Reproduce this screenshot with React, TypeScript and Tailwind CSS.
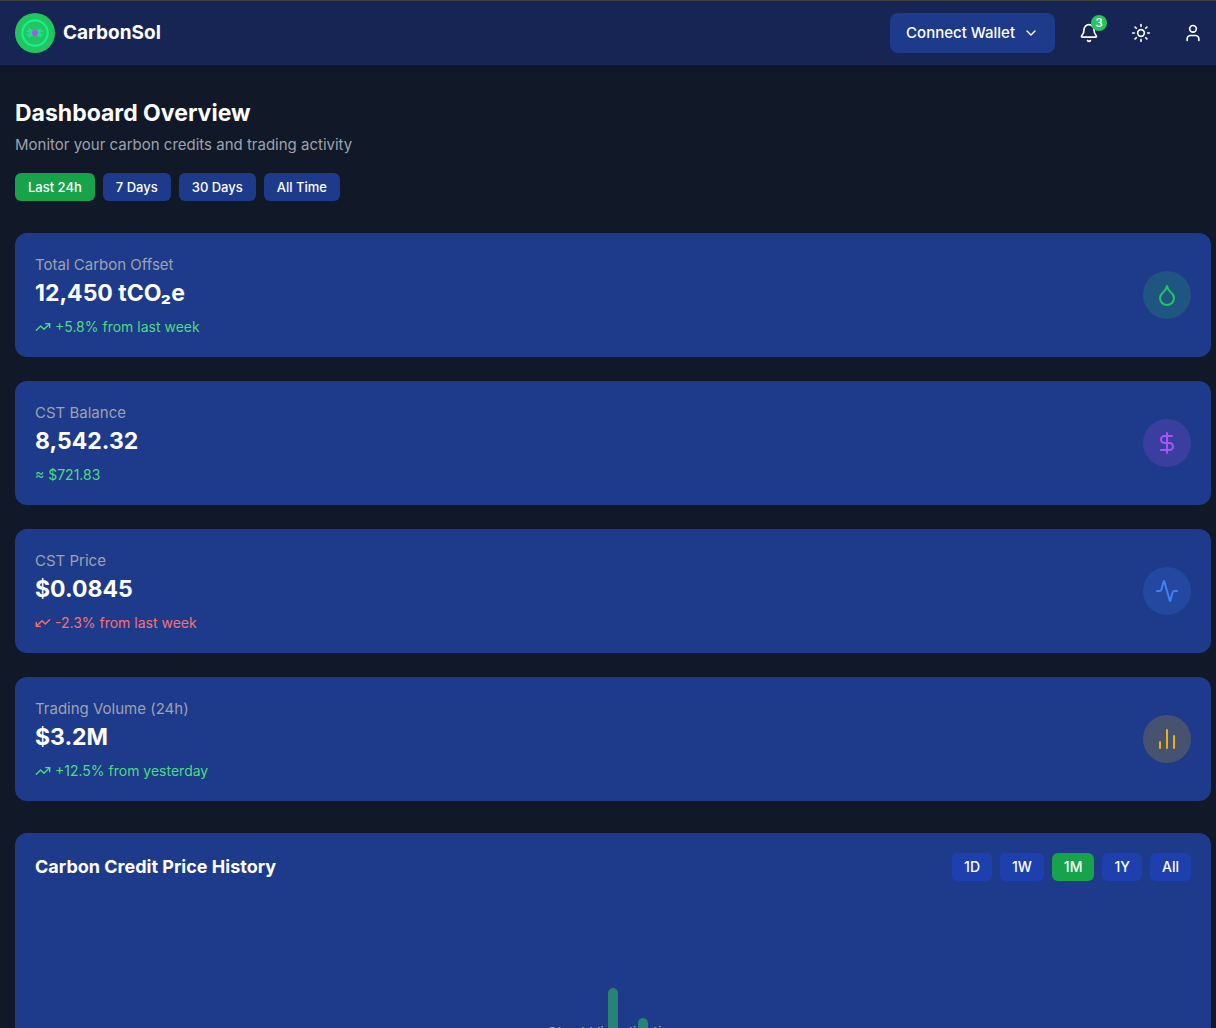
import React from "react";
import {
  Activity,
  Bell,
  ChartNoAxesColumn,
  ChevronDown,
  DollarSign,
  Droplet,
  Sun,
  TrendingUp,
  User,
} from "lucide-react";

function Logo() {
  return (
    <svg className="size-10" viewBox="0 0 40 40" aria-hidden="true">
      <circle cx="20" cy="20" r="20" fill="#22c55e" />
      <circle cx="20" cy="20" r="12.6" fill="none" stroke="#14f195" strokeWidth="2.2" />
      <path
        d="M13.5 16 L20 19.5 L26.5 16 M13.5 24 L20 20.5 L26.5 24"
        fill="none"
        stroke="#1ee391"
        strokeWidth="1.8"
      />
      <path
        d="M11.5 18 L20 20 L28.5 18 M11.5 22 L20 20 L28.5 22"
        fill="none"
        stroke="#1ee391"
        strokeWidth="1.6"
      />
      <circle cx="20" cy="20" r="3" fill="#a855f7" />
    </svg>
  );
}

function Header() {
  return (
    <header className="flex h-[65px] items-center justify-between border-t border-[#404040] bg-[#172554] pr-[5px] pl-[15px]">
      <a href="#" className="flex items-center gap-2">
        <Logo />
        <span className="text-[19px] font-bold">CarbonSol</span>
      </a>
      <div className="flex items-center gap-4">
        <button className="flex h-10 items-center gap-2 rounded-lg bg-[#1e3a8a] px-4 text-[15px] font-medium">
          Connect Wallet
          <ChevronDown className="size-4" />
        </button>
        <button className="relative p-2" aria-label="Notifications">
          <Bell className="size-5" />
          <span className="absolute top-0 right-0 flex size-4 items-center justify-center rounded-full bg-[#22c55e] text-xs font-medium">
            3
          </span>
        </button>
        <button className="p-2" aria-label="Toggle theme">
          <Sun className="size-5" />
        </button>
        <button className="p-2" aria-label="Account">
          <User className="size-5" />
        </button>
      </div>
    </header>
  );
}

const stats = [
  {
    label: "Total Carbon Offset",
    value: "12,450 tCO₂e",
    note: "+5.8% from last week",
    noteClass: "text-[#4ade80]",
    trend: "up",
    icon: Droplet,
    iconClass: "bg-[#22c55e]/20 text-[#22c55e]",
  },
  {
    label: "CST Balance",
    value: "8,542.32",
    note: "≈ $721.83",
    noteClass: "text-[#4ade80]",
    trend: "none",
    icon: DollarSign,
    iconClass: "bg-[#a855f7]/20 text-[#a855f7]",
  },
  {
    label: "CST Price",
    value: "$0.0845",
    note: "-2.3% from last week",
    noteClass: "text-[#f87171]",
    trend: "down",
    icon: Activity,
    iconClass: "bg-[#3b82f6]/20 text-[#3b82f6]",
  },
  {
    label: "Trading Volume (24h)",
    value: "$3.2M",
    note: "+12.5% from yesterday",
    noteClass: "text-[#4ade80]",
    trend: "up",
    icon: ChartNoAxesColumn,
    iconClass: "bg-[#eab308]/20 text-[#eab308]",
  },
];

function StatCard({ stat }: { stat: (typeof stats)[number] }) {
  const Icon = stat.icon;
  return (
    <section className="flex items-center justify-between rounded-xl bg-[#1e3a8a] p-5">
      <div>
        <p className="text-[15px] leading-6 text-[#9ca3af]">{stat.label}</p>
        <p className="text-[23px] leading-8 font-bold">{stat.value}</p>
        <p className={`mt-2 flex items-center gap-1 text-sm ${stat.noteClass}`}>
          {stat.trend === "up" && <TrendingUp className="size-4" />}
          {stat.trend === "down" && <TrendingUp className="size-4 rotate-180" />}
          {stat.note}
        </p>
      </div>
      <div className={`flex size-12 items-center justify-center rounded-full ${stat.iconClass}`}>
        <Icon className="size-6" />
      </div>
    </section>
  );
}

const periods = ["Last 24h", "7 Days", "30 Days", "All Time"];
const ranges = ["1D", "1W", "1M", "1Y", "All"];
const bars = [40, 64, 80, 125, 95, 70, 50];

export default function App() {
  return (
    <div className="h-screen overflow-hidden bg-[#111827] font-[Inter,sans-serif] text-base text-white">
      <Header />
      <main className="pt-8 pr-[5px] pl-[15px]">
        <h1 className="text-[23px] leading-8 font-bold">Dashboard Overview</h1>
        <p className="mt-1 text-[15px] leading-6 text-[#9ca3af]">
          Monitor your carbon credits and trading activity
        </p>
        <div className="mt-4 flex gap-2">
          {periods.map((p, i) => (
            <button
              key={p}
              className={`rounded-md px-[13px] py-1 text-[13px] leading-5 font-medium ${i === 0 ? "bg-[#16a34a]" : "bg-[#1e3a8a]"}`}
            >
              {p}
            </button>
          ))}
        </div>

        <div className="mt-8 grid gap-6">
          {stats.map((s) => (
            <StatCard key={s.label} stat={s} />
          ))}
        </div>

        <section className="mt-8 rounded-xl bg-[#1e3a8a] p-5">
          <div className="flex items-center justify-between">
            <h2 className="text-lg font-bold">Carbon Credit Price History</h2>
            <div className="flex gap-2">
              {ranges.map((r) => (
                <button
                  key={r}
                  className={`rounded-md px-3 py-1 text-sm font-medium ${r === "1M" ? "bg-[#16a34a]" : "bg-[#1e40af]"}`}
                >
                  {r}
                </button>
              ))}
            </div>
          </div>
          <div className="relative mt-6 flex h-64 items-center justify-center">
            <p className="text-[15px] leading-6 text-[#9ca3af]">Chart Visualization</p>
            <div className="absolute inset-x-0 bottom-12 flex items-end justify-center gap-5">
              {bars.map((h, i) => (
                <div key={i} className="w-2.5 rounded-t-full bg-[#268376]" style={{ height: h }} />
              ))}
            </div>
          </div>
        </section>
      </main>
    </div>
  );
}
